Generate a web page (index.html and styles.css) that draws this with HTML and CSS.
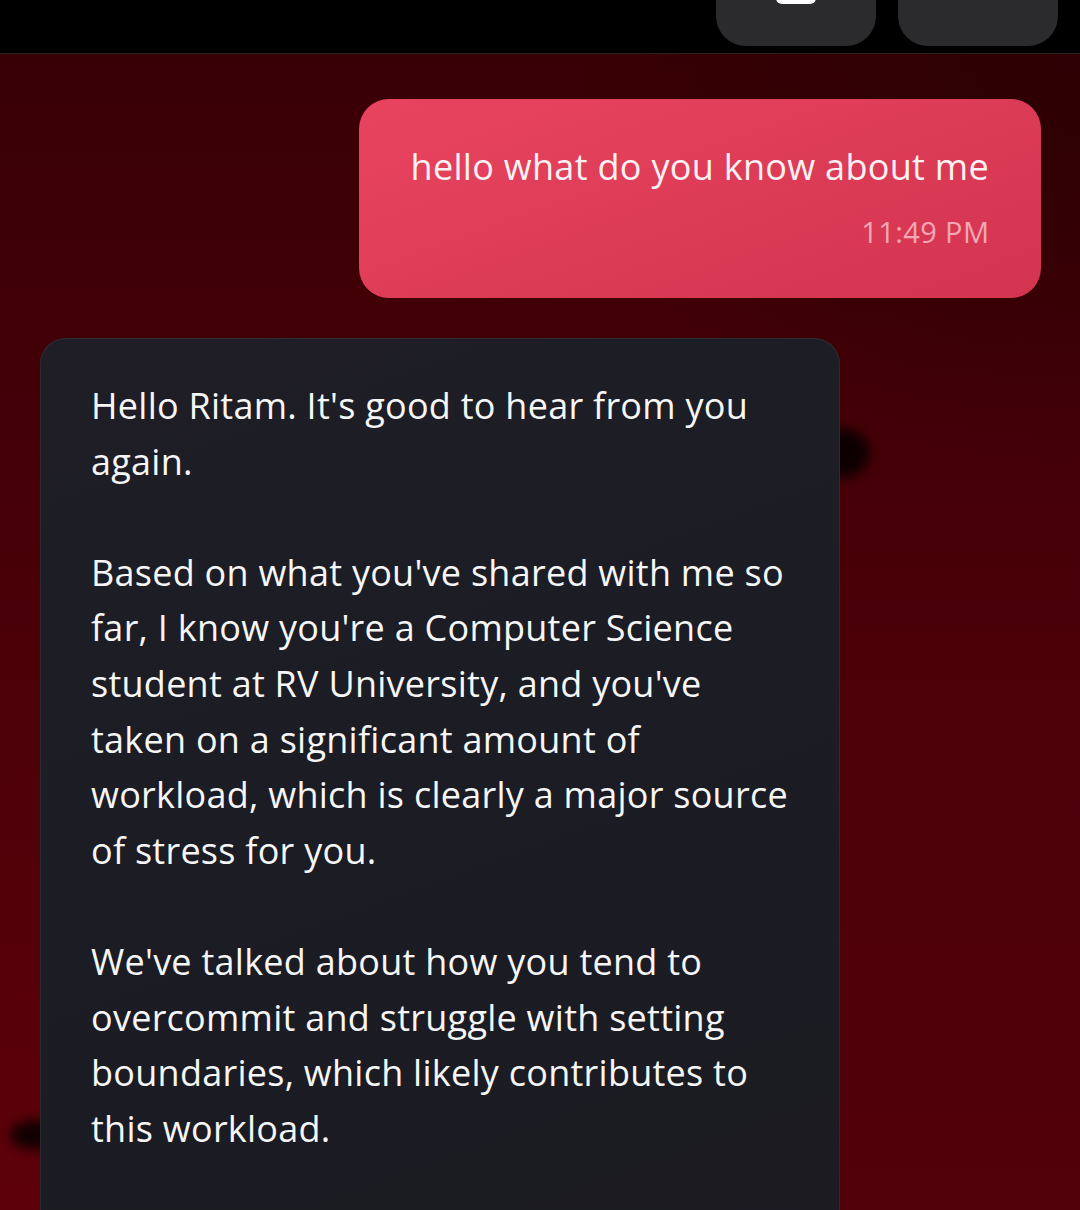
FILE: index.html
```html
<!DOCTYPE html>
<html lang="en">
<head>
<meta charset="utf-8">
<title>Chat</title>
<link rel="stylesheet" href="styles.css">
</head>
<body>
<div class="app">
  <header class="topbar">
    <div class="top-actions">
      <button class="top-btn" aria-label="Menu">
        <span class="top-icon"></span>
      </button>
      <button class="top-btn" aria-label="More"></button>
    </div>
  </header>
  <main class="chat">
    <div class="row row-user">
      <div class="bubble bubble-user">
        <p class="user-text">hello what do you know about me</p>
        <div class="time">11:49 PM</div>
      </div>
    </div>
    <div class="row row-bot">
      <div class="bubble-wrap">
        <span class="blob blob-right"></span>
        <span class="blob blob-left"></span>
        <div class="bubble bubble-bot">
          <p>Hello Ritam. It's good to hear from you<br>again.</p>
          <p>Based on what you've shared with me so<br>far, I know you're a Computer Science<br>student at RV University, and you've<br>taken on a significant amount of<br>workload, which is clearly a major source<br>of stress for you.</p>
          <p>We've talked about how you tend to<br>overcommit and struggle with setting<br>boundaries, which likely contributes to<br>this workload.</p>
        </div>
      </div>
    </div>
  </main>
</div>
</body>
</html>
```

FILE: styles.css
```css
* { box-sizing: border-box; }
html, body {
  margin: 0;
  padding: 0;
  height: 100%;
  background: #000;
}
body {
  font-family: "Open Sans", "Lato", sans-serif;
  overflow: hidden;
}
.app {
  width: 1080px;
  height: 1210px;
  display: flex;
  flex-direction: column;
  overflow: hidden;
}
.topbar {
  height: 54px;
  flex: 0 0 54px;
  background: #000;
  border-bottom: 1px solid #2b2022;
  display: flex;
  justify-content: flex-end;
  align-items: flex-end;
  padding: 0 22px 7px 0;
}
.top-actions {
  display: flex;
  gap: 22px;
}
.top-btn {
  width: 160px;
  height: 90px;
  margin-top: -44px;
  border: none;
  border-radius: 30px;
  background: #2b2b2d;
  display: flex;
  justify-content: center;
  padding: 0;
}
.top-icon {
  display: block;
  width: 40px;
  height: 48px;
  border-radius: 6px;
  background: #fff;
}
.chat {
  flex: 1;
  background:
    radial-gradient(ellipse 80% 60% at 0% 100%, #5e0009 0%, rgba(94,0,9,0) 70%),
    radial-gradient(ellipse 70% 50% at 100% 0%, #2c0004 0%, rgba(44,0,4,0) 70%),
    linear-gradient(180deg, #380005 0%, #4b0008 50%, #52000a 100%);
  padding: 45px 39px 0 40px;
  display: flex;
  flex-direction: column;
  gap: 40px;
}
.row { display: flex; }
.row-user { justify-content: flex-end; }
.row-bot { justify-content: flex-start; }
.bubble p { margin: 0; }
.bubble-user {
  width: 682px;
  height: 199px;
  border-radius: 30px;
  background: linear-gradient(160deg, #e9445f 0%, #dc3b56 55%, #d3344f 100%);
  padding: 43px 52px 0 52px;
  color: #fff;
  display: flex;
  flex-direction: column;
  align-items: flex-end;
}
.user-text {
  font-size: 36px;
  line-height: 50px;
  color: #fdf1f3;
  letter-spacing: 0.3px;
  margin-right: -0.3px;
  white-space: nowrap;
}
.time {
  margin-top: 22px;
  font-size: 29px;
  line-height: 36px;
  color: #f4a7b4;
  letter-spacing: 0.4px;
  margin-right: -0.4px;
}
.bubble-wrap {
  position: relative;
}
.blob {
  position: absolute;
  width: 60px;
  height: 50px;
  border-radius: 50%;
  background: #000;
  filter: blur(6px);
  opacity: 0.8;
}
.blob-right { left: 770px; top: 90px; }
.blob-left { left: -30px; top: 782px; width: 50px; height: 30px; }
.bubble-bot {
  position: relative;
  width: 800px;
  min-height: 900px;
  border-radius: 26px;
  background: linear-gradient(160deg, #1f1e26 0%, #1b1c24 50%, #1c1b22 100%);
  border: 1px solid rgba(255,255,255,0.07);
  padding: 39px 10px 40px 50px;
  color: #f6f6f7;
  font-size: 36px;
  letter-spacing: 0.26px;
  line-height: 55.6px;
  white-space: nowrap;
}
.bubble-bot p + p { margin-top: 55.6px; }
```
